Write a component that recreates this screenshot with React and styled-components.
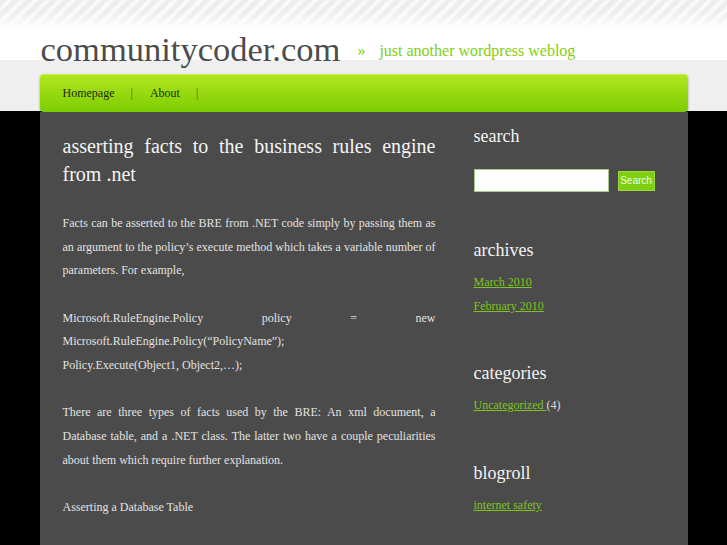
import styled, { createGlobalStyle } from "styled-components";

const GlobalStyle = createGlobalStyle`
  html, body {
    margin: 0;
    padding: 0;
    background: #000;
  }
  body {
    font-family: "Liberation Serif", "Times New Roman", serif;
  }
`;

const Page = styled.div`
  min-height: 100vh;
  display: flex;
  flex-direction: column;
`;

const Masthead = styled.header`
  padding-top: 29px;
  background:
    linear-gradient(rgba(255, 255, 255, 0) 12px, #fff 30px) 0 0 / 100% 30px no-repeat,
    repeating-linear-gradient(135deg, #ededed 0 5px, #f9f9f9 5px 9px) 0 0 / 100% 30px no-repeat,
    linear-gradient(#fff 0 60px, #efefef 60px 111px, #000 111px);
`;

const Wrap = styled.div`
  width: 648px;
  margin: 0 auto;
`;

const Branding = styled.div`
  display: flex;
  align-items: baseline;
  height: 40px;
  padding-left: 1px;
`;

const Logo = styled.h1`
  margin: 0;
  font-size: 34.5px;
  line-height: 40px;
  font-weight: normal;
  color: #4c4c4c;
`;

const Tagline = styled.p`
  margin: 0 0 0 17px;
  font-size: 16px;
  color: #7fcf10;
  position: relative;
  top: -5px;
`;

const Arrow = styled.span`
  margin-right: 14px;
`;

const Nav = styled.nav`
  margin-top: 5px;
  height: 38px;
  border-radius: 4px;
  background: linear-gradient(#b4e61e, #7ccd03);
  box-shadow: 0 1px 2px rgba(0, 0, 0, 0.45), inset 0 1px 0 rgba(220, 250, 120, 0.6);
  display: flex;
  align-items: center;
  padding-left: 6px;
`;

const NavItem = styled.a`
  font-size: 12px;
  color: #1e2a05;
  text-decoration: none;
  padding-left: 17px;
  &::after {
    content: "|";
    color: #4d6a0c;
    margin-left: 16px;
  }
`;

const Panel = styled.div`
  flex: 1;
  width: 648px;
  margin: 0 auto;
  box-sizing: border-box;
  background: #4b4b4b;
  padding: 0 23px;
  display: grid;
  grid-template-columns: 373px 191px;
  column-gap: 38px;
  align-items: start;
`;

const Post = styled.article`
  padding-top: 20px;
  color: #e2e2e2;
`;

const PostTitle = styled.h2`
  margin: 0 0 24px;
  font-size: 20px;
  line-height: 28px;
  font-weight: normal;
  text-align: justify;
  color: #f4f4f4;
`;

const Para = styled.p`
  margin: 0 0 23.67px;
  font-size: 12px;
  line-height: 23.67px;
  text-align: justify;
  &:last-child {
    margin-bottom: 0;
  }
`;

const Sidebar = styled.aside`
  padding-top: 12px;
`;

const Widget = styled.section`
  margin-bottom: 43px;
  &:last-child {
    margin-bottom: 0;
  }
`;

const WidgetTitle = styled.h3`
  margin: 0 0 9px;
  font-size: 18px;
  line-height: 24px;
  font-weight: normal;
  color: #f2f2f2;
`;

const SearchForm = styled.form`
  display: flex;
  align-items: center;
  gap: 9px;
  padding: 12px 0 3px;
`;

const SearchInput = styled.input`
  width: 135px;
  height: 23px;
  box-sizing: border-box;
  border: 1px solid #a9c98c;
  background: #fdfdfd;
  padding: 0 4px;
  margin: 0;
`;

const SearchButton = styled.button`
  height: 20px;
  width: 37px;
  padding: 0;
  margin: 0;
  border: 1px solid #9ad83e;
  background: #7fcf10;
  color: #f4ffe0;
  font-family: "Liberation Sans", Arial, sans-serif;
  font-size: 10px;
`;

const LinkList = styled.ul`
  margin: 0;
  padding: 0;
  list-style: none;
  font-size: 12px;
  line-height: 23.67px;
  color: #dcdcdc;
`;

const SideLink = styled.a`
  color: #7ec41e;
  text-decoration: underline;
`;

const archives = ["March 2010", "February 2010"];

export default function App() {
  return (
    <Page>
      <GlobalStyle />
      <Masthead>
        <Wrap>
          <Branding>
            <Logo>communitycoder.com</Logo>
            <Tagline>
              <Arrow>»</Arrow>just another wordpress weblog
            </Tagline>
          </Branding>
          <Nav>
            <NavItem href="#">Homepage</NavItem>
            <NavItem href="#">About</NavItem>
          </Nav>
        </Wrap>
      </Masthead>
      <Panel>
        <Post>
          <PostTitle>asserting facts to the business rules engine from .net</PostTitle>
          <Para>
            Facts can be asserted to the BRE from .NET code simply by passing them as an argument
            to the policy’s execute method which takes a variable number of parameters. For
            example,
          </Para>
          <Para>
            Microsoft.RuleEngine.Policy policy = new Microsoft.RuleEngine.Policy(“PolicyName”);
            <br />
            Policy.Execute(Object1, Object2,…);
          </Para>
          <Para>
            There are three types of facts used by the BRE: An xml document, a Database table, and
            a .NET class. The latter two have a couple peculiarities about them which require
            further explanation.
          </Para>
          <Para>Asserting a Database Table</Para>
        </Post>
        <Sidebar>
          <Widget>
            <WidgetTitle>search</WidgetTitle>
            <SearchForm onSubmit={(e) => e.preventDefault()}>
              <SearchInput type="text" />
              <SearchButton type="submit">Search</SearchButton>
            </SearchForm>
          </Widget>
          <Widget>
            <WidgetTitle>archives</WidgetTitle>
            <LinkList>
              {archives.map((a) => (
                <li key={a}>
                  <SideLink href="#">{a} </SideLink>
                </li>
              ))}
            </LinkList>
          </Widget>
          <Widget>
            <WidgetTitle>categories</WidgetTitle>
            <LinkList>
              <li>
                <SideLink href="#">Uncategorized </SideLink> (4)
              </li>
            </LinkList>
          </Widget>
          <Widget>
            <WidgetTitle>blogroll</WidgetTitle>
            <LinkList>
              <li>
                <SideLink href="#">internet safety </SideLink>
              </li>
            </LinkList>
          </Widget>
        </Sidebar>
      </Panel>
    </Page>
  );
}
